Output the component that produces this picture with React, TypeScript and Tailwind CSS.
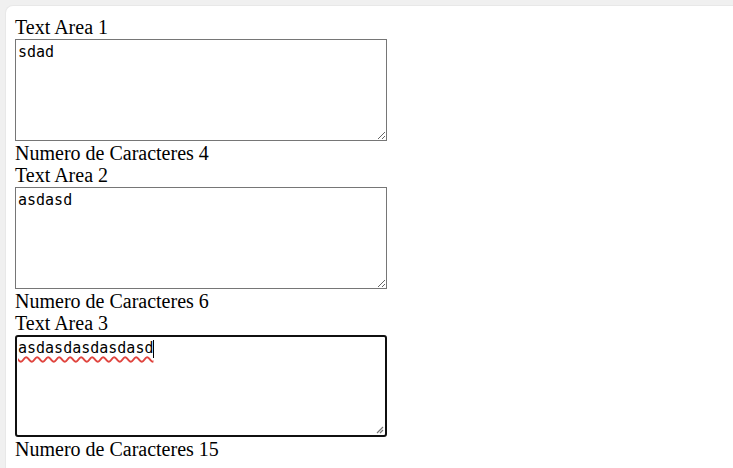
import React from "react";

const serif = { fontFamily: '"Liberation Serif", "Times New Roman", serif' };

function Field({ n, value, focused }: { n: number; value: string; focused?: boolean }) {
  return (
    <div>
      <div>Text Area {n}</div>
      {focused ? (
        <div className="relative my-px w-[372px] h-[102px] rounded-[3px] border-2 border-[#101010] bg-white pl-[1px] pt-[3px] font-['DejaVu_Sans_Mono',monospace] text-[15px] leading-[17px] text-black">
          <span className="underline decoration-wavy decoration-[#e0443e] decoration-[1.5px] underline-offset-[3px]">
            {value}
          </span>
          <span className="inline-block w-px h-[18px] bg-black align-top" />
          <svg
            className="absolute right-[1px] bottom-[1px]"
            width="9"
            height="9"
            viewBox="0 0 9 9"
          >
            <path d="M8 2 L2 8 M8 5 L5 8" stroke="#767676" strokeWidth="1.2" />
          </svg>
        </div>
      ) : (
        <textarea
          defaultValue={value}
          spellCheck={false}
          className="block my-px w-[372px] h-[102px] border border-[#767676] bg-white pl-[2px] pr-[2px] pt-[4px] pb-[2px] font-['DejaVu_Sans_Mono',monospace] text-[15px] leading-[17px] text-black outline-none"
        />
      )}
      <div>Numero de Caracteres {value.length}</div>
    </div>
  );
}

export default function App() {
  return (
    <div className="min-h-[468px] bg-[#f0f0f0] pt-[5px] pl-[5px]">
      <div
        className="min-h-[463px] rounded-tl-lg bg-white border-t border-l border-[#e8e8e8] pl-[9px] pt-[10px] text-[20px] leading-[22px] text-black"
        style={serif}
      >
        <Field n={1} value="sdad" />
        <Field n={2} value="asdasd" />
        <Field n={3} value="asdasdasdasdasd" focused />
      </div>
    </div>
  );
}
